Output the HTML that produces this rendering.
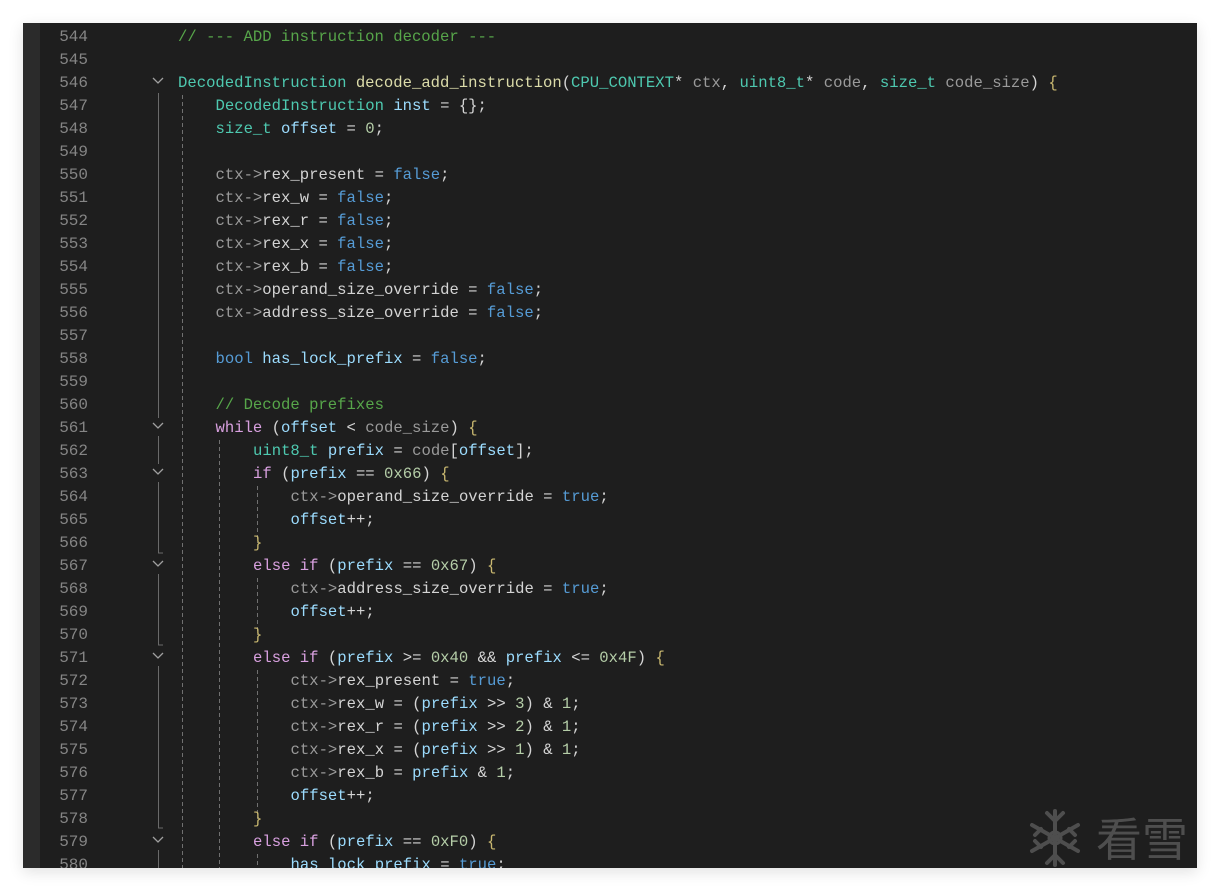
<!DOCTYPE html>
<html><head><meta charset="utf-8"><style>
html,body{margin:0;padding:0;background:#fff;width:1220px;height:893px;overflow:hidden}
#ed{position:absolute;left:23px;top:23px;width:1174px;height:845px;background:#1e1e1e;overflow:hidden;box-shadow:0 4px 14px rgba(0,0,0,0.12)}
#gut{position:absolute;left:0;top:0;width:17px;height:845px;background:#2b2b2b}
.l{position:absolute;height:23px;line-height:23px;font-family:"Liberation Mono",monospace;font-size:15.6px;white-space:pre;color:#d4d4d4}
.num{color:#858585;left:30px;width:35px;text-align:right;font-size:16px}
.c{color:#57a64a}.t{color:#4ec9b0}.k{color:#569cd6}.p{color:#d8a0df}.v{color:#9cdcfe}.g{color:#9a9a9a}.n{color:#b5cea8}.f{color:#dcdcaa}.y{color:#c9b870}
</style></head><body>
<div id="ed"><div id="gut"></div>
<svg width="1174" height="845" style="position:absolute;left:0;top:0">
<g stroke="#a0a0a0" stroke-width="1.3" fill="none">
<polyline points="130,55 135,60 140,55"/>
<polyline points="130,400 135,405 140,400"/>
<polyline points="130,446 135,451 140,446"/>
<polyline points="130,538 135,543 140,538"/>
<polyline points="130,630 135,635 140,630"/>
<polyline points="130,814 135,819 140,814"/>
</g>
<g stroke="#6a6a6a" stroke-width="1" fill="none">
<line x1="135.5" y1="70" x2="135.5" y2="395"/>
<line x1="135.5" y1="413" x2="135.5" y2="441"/>
<polyline points="135.5,459 135.5,530 140,530"/>
<polyline points="135.5,551 135.5,622 140,622"/>
<polyline points="135.5,643 135.5,805 140,805"/>
<line x1="135.5" y1="827" x2="135.5" y2="845"/>
</g>
<g stroke="#707070" stroke-width="1" stroke-dasharray="4,3" fill="none">
<line x1="159.5" y1="72" x2="159.5" y2="845"/>
<line x1="196.5" y1="417" x2="196.5" y2="845"/>
<line x1="234.5" y1="463" x2="234.5" y2="520"/>
<line x1="234.5" y1="555" x2="234.5" y2="612"/>
<line x1="234.5" y1="647" x2="234.5" y2="796"/>
<line x1="234.5" y1="831" x2="234.5" y2="845"/>
</g>
<g fill="none" stroke="#4e4e4e" stroke-width="4" stroke-linecap="round">
<line x1="1032" y1="788" x2="1032" y2="842"/>
<line x1="1009" y1="802" x2="1055" y2="828"/>
<line x1="1009" y1="828" x2="1055" y2="802"/>
<line x1="1024" y1="790" x2="1032" y2="798"/><line x1="1040" y1="790" x2="1032" y2="798"/>
<line x1="1024" y1="840" x2="1032" y2="832"/><line x1="1040" y1="840" x2="1032" y2="832"/>
<line x1="1012" y1="812" x2="1018" y2="806"/><line x1="1052" y1="812" x2="1046" y2="806"/>
<line x1="1012" y1="818" x2="1018" y2="824"/><line x1="1052" y1="818" x2="1046" y2="824"/>
<circle cx="1032" cy="815" r="6" stroke-width="3"/>
</g>
<text x="1073" y="833" font-family="Noto Sans CJK SC, sans-serif" font-size="46" fill="#4e4e4e">看雪</text>
</svg>
<div id="code"></div>
</div>
<script>
var L=[
[544,0,'<span class="c">// --- ADD instruction decoder ---</span>'],
[545,0,''],
[546,0,'<span class="t">DecodedInstruction</span> <span class="f">decode_add_instruction</span>(<span class="t">CPU_CONTEXT</span>* <span class="g">ctx</span>, <span class="t">uint8_t</span>* <span class="g">code</span>, <span class="t">size_t</span> <span class="g">code_size</span>) <span class="y">{</span>'],
[547,1,'<span class="t">DecodedInstruction</span> <span class="v">inst</span> = {};'],
[548,1,'<span class="t">size_t</span> <span class="v">offset</span> = <span class="n">0</span>;'],
[549,0,''],
[550,1,'<span class="g">ctx-&gt;</span>rex_present = <span class="k">false</span>;'],
[551,1,'<span class="g">ctx-&gt;</span>rex_w = <span class="k">false</span>;'],
[552,1,'<span class="g">ctx-&gt;</span>rex_r = <span class="k">false</span>;'],
[553,1,'<span class="g">ctx-&gt;</span>rex_x = <span class="k">false</span>;'],
[554,1,'<span class="g">ctx-&gt;</span>rex_b = <span class="k">false</span>;'],
[555,1,'<span class="g">ctx-&gt;</span>operand_size_override = <span class="k">false</span>;'],
[556,1,'<span class="g">ctx-&gt;</span>address_size_override = <span class="k">false</span>;'],
[557,0,''],
[558,1,'<span class="k">bool</span> <span class="v">has_lock_prefix</span> = <span class="k">false</span>;'],
[559,0,''],
[560,1,'<span class="c">// Decode prefixes</span>'],
[561,1,'<span class="p">while</span> (<span class="v">offset</span> &lt; <span class="g">code_size</span>) <span class="y">{</span>'],
[562,2,'<span class="t">uint8_t</span> <span class="v">prefix</span> = <span class="g">code</span>[<span class="v">offset</span>];'],
[563,2,'<span class="p">if</span> (<span class="v">prefix</span> == <span class="n">0x66</span>) <span class="y">{</span>'],
[564,3,'<span class="g">ctx-&gt;</span>operand_size_override = <span class="k">true</span>;'],
[565,3,'<span class="v">offset</span>++;'],
[566,2,'<span class="y">}</span>'],
[567,2,'<span class="p">else if</span> (<span class="v">prefix</span> == <span class="n">0x67</span>) <span class="y">{</span>'],
[568,3,'<span class="g">ctx-&gt;</span>address_size_override = <span class="k">true</span>;'],
[569,3,'<span class="v">offset</span>++;'],
[570,2,'<span class="y">}</span>'],
[571,2,'<span class="p">else if</span> (<span class="v">prefix</span> &gt;= <span class="n">0x40</span> &amp;&amp; <span class="v">prefix</span> &lt;= <span class="n">0x4F</span>) <span class="y">{</span>'],
[572,3,'<span class="g">ctx-&gt;</span>rex_present = <span class="k">true</span>;'],
[573,3,'<span class="g">ctx-&gt;</span>rex_w = (<span class="v">prefix</span> &gt;&gt; <span class="n">3</span>) &amp; <span class="n">1</span>;'],
[574,3,'<span class="g">ctx-&gt;</span>rex_r = (<span class="v">prefix</span> &gt;&gt; <span class="n">2</span>) &amp; <span class="n">1</span>;'],
[575,3,'<span class="g">ctx-&gt;</span>rex_x = (<span class="v">prefix</span> &gt;&gt; <span class="n">1</span>) &amp; <span class="n">1</span>;'],
[576,3,'<span class="g">ctx-&gt;</span>rex_b = <span class="v">prefix</span> &amp; <span class="n">1</span>;'],
[577,3,'<span class="v">offset</span>++;'],
[578,2,'<span class="y">}</span>'],
[579,2,'<span class="p">else if</span> (<span class="v">prefix</span> == <span class="n">0xF0</span>) <span class="y">{</span>'],
[580,3,'<span class="v">has_lock_prefix</span> = <span class="k">true</span>;']
];
var h='';
L.forEach(function(r,i){var top=3+i*23;
h+='<div class="l num" style="top:'+top+'px">'+r[0]+'</div>';
h+='<div class="l" style="top:'+top+'px;left:'+(155+37.5*r[1])+'px">'+r[2]+'</div>';});
document.getElementById('code').innerHTML=h;
</script>
</body></html>
